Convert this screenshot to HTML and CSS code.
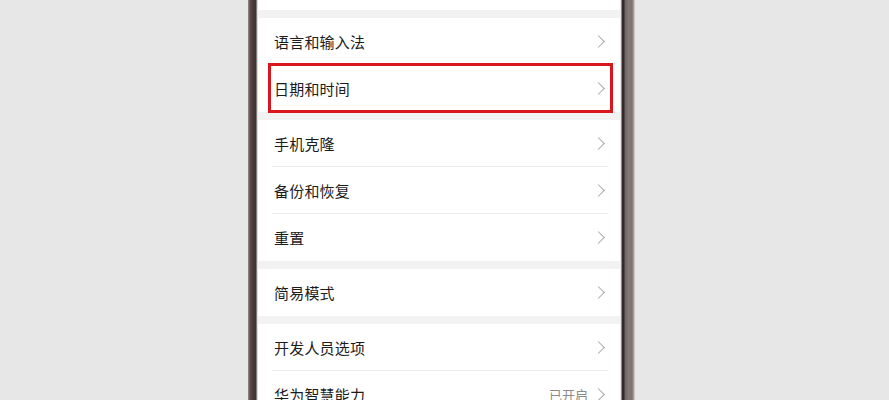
FILE: index.html
```html
<!DOCTYPE html>
<html lang="zh-CN">
<head>
    <meta charset="UTF-8">
    <meta name="viewport" content="width=device-width, initial-scale=1.0">
    <title>设置 - 系统和更新</title>
    <link rel="stylesheet" href="styles.css">
</head>
<body>
    <div class="phone">
        <div class="edge-left"></div>
        <div class="screen">
            <div class="top-rest"></div>
            <div class="band"></div>
            <div class="group">
                <div class="row"><span class="label">语言和输入法</span><span class="chevron"></span></div>
                <div class="row marked"><span class="label">日期和时间</span><span class="chevron"></span><div class="mark-box"></div></div>
            </div>
            <div class="band"></div>
            <div class="group">
                <div class="row"><span class="label">手机克隆</span><span class="chevron"></span></div>
                <div class="row"><span class="label">备份和恢复</span><span class="chevron"></span></div>
                <div class="row"><span class="label">重置</span><span class="chevron"></span></div>
            </div>
            <div class="band"></div>
            <div class="group">
                <div class="row"><span class="label">简易模式</span><span class="chevron"></span></div>
            </div>
            <div class="band"></div>
            <div class="group">
                <div class="row"><span class="label">开发人员选项</span><span class="chevron"></span></div>
                <div class="row"><span class="label">华为智慧能力</span><span class="value">已开启</span><span class="chevron"></span></div>
            </div>
        </div>
        <div class="edge-right"></div>
    </div>
</body>
</html>
```

FILE: styles.css
```css
body {
    margin: 0;
    padding: 0;
    background-color: #e7e7e7;
    font-family: "Noto Sans CJK SC", "Noto Sans", sans-serif;
    height: 400px;
    overflow: hidden;
}

.phone {
    display: flex;
    margin-left: 248px;
    width: 387px;
    height: 400px;
}

.edge-left {
    width: 10px;
    background: linear-gradient(to right, #9a8f8c 0, #5e4e4a 2px, #47383a 5px, #3e3232 8px, #c9c6c6 9px, #f4f4f4 10px);
}

.screen {
    width: 362px;
    background-color: #ffffff;
    overflow: hidden;
}

.edge-right {
    width: 15px;
    background: linear-gradient(to right, #f6f6f6 0, #e2e0e0 1px, #3a3030 2px, #2e2626 4px, #6f6562 5px, #857a77 9px, #7d716e 12px, #b3aeac 14px, #dcdcdc 15px);
}

.top-rest {
    height: 10px;
}

.band {
    height: 8px;
    background-color: #f2f2f2;
}

.row {
    position: relative;
    display: flex;
    align-items: center;
    height: 47px;
    margin: 0 12px 0 14px;
    padding: 0 0 0 2px;
    box-sizing: border-box;
    border-bottom: 1px solid #e9e9e9;
}

.group .row:last-child {
    border-bottom: none;
}

.label {
    flex: 1;
    font-size: 15px;
    color: #1c1c1c;
    letter-spacing: 0.2px;
}

.value {
    font-size: 13px;
    color: #8a8a8a;
    margin-right: 6px;
}

.chevron {
    width: 8px;
    height: 8px;
    border-right: 1.6px solid #a9a9a9;
    border-top: 1.6px solid #a9a9a9;
    transform: rotate(45deg);
    margin-right: 5px;
}

.mark-box {
    position: absolute;
    left: -4px;
    right: -5px;
    top: -2px;
    bottom: -1px;
    border: 3px solid #d9161d;
}
```
